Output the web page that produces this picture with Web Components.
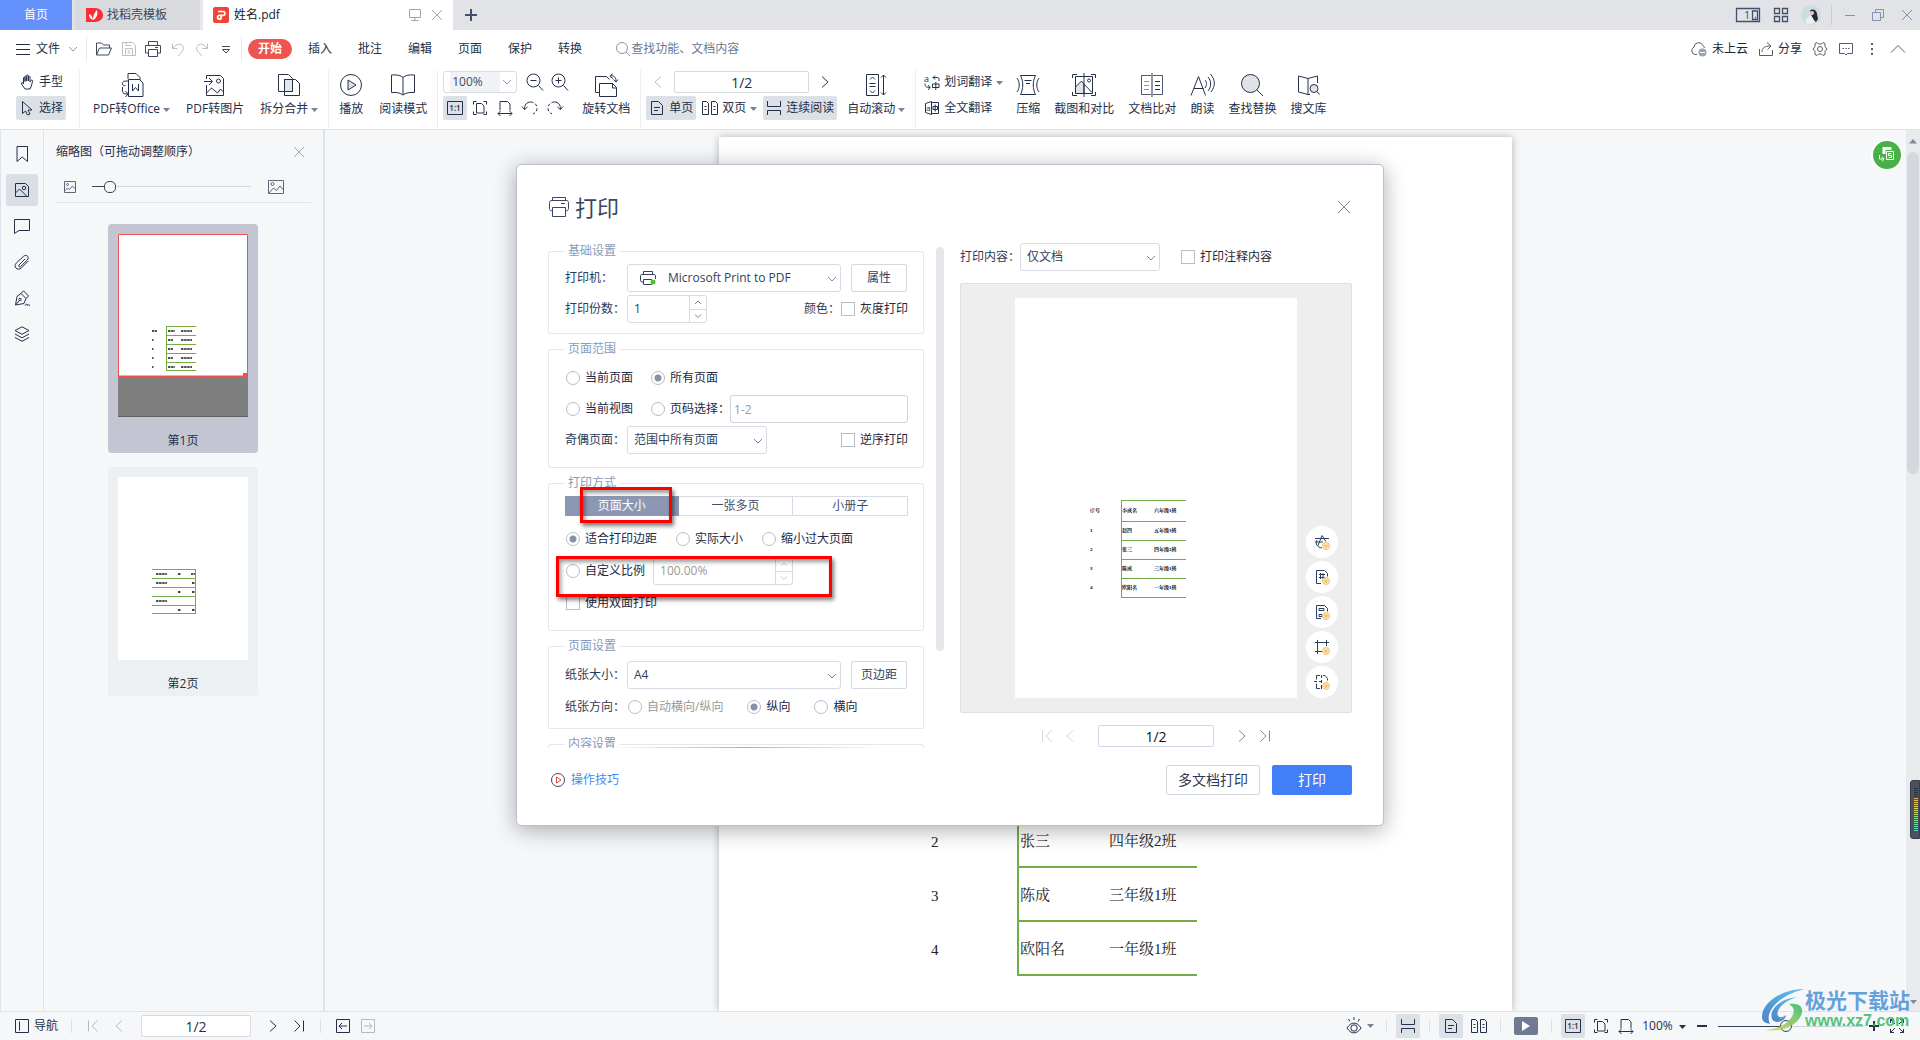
<!DOCTYPE html>
<html lang="zh-CN">
<head>
<meta charset="utf-8">
<title>姓名.pdf</title>
<style>
html,body{margin:0;height:100%;overflow:hidden}
body{font:12px/16px "Open Sans","Noto Sans CJK SC",sans-serif;color:#24304a;background:#f5f7f9}
</style>
</head>
<body>
<pdf-app></pdf-app>
<script>
const BASE = `
*{box-sizing:border-box}
button,input,select{font:inherit;color:inherit;margin:0}
button{border:0;background:none;padding:0;display:inline-flex;align-items:center;justify-content:center;white-space:nowrap}
a{color:inherit;text-decoration:none}
input,select{outline:0}
ui-icon{flex:none}
`;
function define(tag, css, html) {
  customElements.define(tag, class extends HTMLElement {
    constructor() {
      super();
      this.attachShadow({mode: 'open'}).innerHTML =
        `<style>${BASE}${css}</style>` + (typeof html === 'function' ? html(this) : html);
    }
  });
}

const DOC = '<path d="M2.5 1.5h7l4 4v9h-11z"/>';
const COIN = '<circle cx="12" cy="12" r="3.5" fill="#fbe3b8" stroke="#f5c677"/><path d="M10.5 11l1.5 1.2 1.5-1.2M12 12v2" stroke="#eda94a"/>';
// name: [size, svg content]
const ICONS = {
  menu: [16, '<path d="M1 3.5h14M1 8.5h14M1 13.5h14"/>'],
  chev: [10, '<path d="M1 3l4 4 4-4"/>'],
  chevs: [8, '<path d="M1 6l3-3 3 3"/>'],
  chevd: [8, '<path d="M1 2.500l3 3 3-3"/>'],
  chevup: [16, '<path d="M1 11.500l7-7 7 7"/>'],
  folder: [18, '<path d="M1.500 15V3h5l2 2h6v3M1.500 15l3-7h12l-3 7z"/>'],
  save: [16, '<path d="M1.500 14.500v-13h10l3 3v10zM4.500 14.500v-7h7v7M5 1.500v3h5M6.500 10h3M6.500 12h3"/>'],
  print: [18, '<path d="M4.500 5V1.500h9V5M4.500 13h-3V5.500h15V13h-3M4.500 9.500h9v7h-9zM11 7.500h3"/>'],
  printbig: [22, '<path d="M4.500 4V1.500h13V4M4.500 15c-2 0-3-1-3-2.500v-6C1.500 5 2.500 4.500 4 4.500h14c1.500 0 2.500.5 2.500 2v6c0 1.500-1 2.500-3 2.500M4.500 11.500h13v9h-13zM13 7.500h4"/>'],
  undo: [16, '<path d="M2.500 2.500v5h5M2.500 7.500l3-3c4-3 8-.5 8 3 0 4-5 5-5 7.500"/>'],
  redo: [16, '<path d="M13.500 2.500v5h-5M13.500 7.500l-3-3c-4-3-8-.5-8 3 0 4 5 5 5 7.500"/>'],
  more: [12, '<path d="M2 3.500h8M2.500 6.500l3.500 3.500 3.500-3.500z"/>'],
  search: [16, '<circle cx="7" cy="7" r="5.500"/><path d="M11 11l4 4"/>'],
  close: [14, '<path d="M2 2l10 10M12 2L2 12"/>'],
  closebig: [14, '<path d="M1 1l12 12M13 1L1 13"/>'],
  plus: [14, '<path d="M7 1v12M1 7h12" stroke-width="2"/>'],
  plusS: [14, '<path d="M7 2v10M2 7h10" stroke-width="2"/>'],
  screen: [14, '<path d="M1.500 1.500h11v8h-11zM7 9.500v3M3.500 12.500h7"/>'],
  docer: [16, '<path d="M0 2h9a7 6 0 010 14H0z" transform="translate(0 -1)" fill="#fb2f33" stroke="none"/><path d="M7 13c-3-1-4-3-4-6 2 0 3 2 4 6zM7 13c0-4 1-7 4-10 1 4 0 8-4 10z" fill="#fff" stroke="none"/>'],
  pdf: [16, '<rect width="16" height="16" rx="2" fill="#f0453a" stroke="none"/><path d="M5 4.500h5a1.900 1.900 0 010 3.800H6.500a1.900 1.900 0 100 3.800A1.700 1.700 0 008.200 10.400V9" stroke="#fff" stroke-width="1.700"/>'],
  devices: [26, '<path d="M1.500 6.500h23v13h-23zM17.500 9h5v8.500h-5zM20 15.500h1" stroke-width="1.300"/><text x="9" y="17" font-size="11" fill="currentColor" stroke="none">1</text>'],
  grid: [16, '<path d="M1.500 1.500h5v5h-5zM9.500 1.500h5v5h-5zM1.500 9.500h5v5h-5zM9.500 9.500h5v5h-5z" stroke-width="1.300"/>'],
  avatar: [20, '<circle cx="10" cy="10" r="10" fill="#c9dde3" stroke="none"/><path d="M9 6c2-3 7-1 7 3l1 5-2 3-3-3-2-5z" fill="#2c2630" stroke="none"/><circle cx="11" cy="8" r="2" fill="#f0cfc8" stroke="none"/><path d="M5 18c0-5 2-7 4-7s4 3 4 7a10 10 0 01-8 0z" fill="#e9f1f4" stroke="none"/>'],
  min: [12, '<path d="M1 6.500h10"/>'],
  restore: [14, '<path d="M1.500 4.500h8v8h-8zM4.500 4.500v-3h8v8h-3"/>'],
  cloud: [18, '<path d="M7 14.500H5A4 4 0 014 7a4.700 4.700 0 019-1.500c.5.500 1 1.500 1.500 2.500"/><circle cx="12.500" cy="12.500" r="4" fill="#99a3b8" stroke="none"/><path d="M10 12.500h5" stroke="#fff"/>'],
  share: [16, '<path d="M1.500 8v6.500h13V9M4 11c0-4 3-6 8-6M9 1.500L13 5 9.500 8.500"/>'],
  gear: [16, '<path d="M5 1.500l1.500 1.500h3L11 1.500l2 1v3l2 2.500-2 2.500v3l-2 1-1.500-1.500h-3L5 14.500l-2-1v-3L1 8l2-2.500v-3z"/><circle cx="8" cy="8" r="2.500"/>'],
  chat: [16, '<path d="M1.500 2.500h13v10h-5L8 14l-1.500-1.500h-5z"/><path d="M4.500 7.500h1.500M7.300 7.500h1.500M10 7.500h1.500"/>'],
  dots: [16, '<path d="M8 2v2M8 7v2M8 12v2" stroke-width="2"/>'],
  hand: [16, '<path d="M4.500 10V4c0-1 1.500-1 1.500 0v3.500V2.500c0-1 1.700-1 1.700 0V7 1.800c0-1 1.700-1 1.700 0V7 3c0-1 1.600-1 1.600 0v5l1-1.500c1-1 2-.3 1.600.8L12 13l-1 2H6l-3.500-5c-.8-1.200.8-2.300 2 0z"/>'],
  cursor: [16, '<path d="M3.500 1.500v12l3-2.500 2 4 2.500-1-2-4h4z"/>'],
  office: [24, '<path d="M8 6V.500h8l4 4V7M8.500 8c-4 0-6 0-6 2.500S4 13 5.500 12.500M2.500 14v4c0 2 1 3 5 3M5.500 18l2.500 3-2.500 3"/><path d="M8.500 6.500h11l3.500 3.500v13.500H8.500z" fill="#fff"/><path d="M12.500 11v7l3-3.500 3 3.500v-7"/>'],
  topic: [24, '<path d="M3.500 6V2.500h14l3 3V22.500H3.500V12M1 8.500h8M6 5l3.500 3.500L6 12M3.500 20l5-5 6 5 3-4 3 3"/><circle cx="15.500" cy="8" r="2"/>'],
  split: [24, '<path d="M1.500 1.500h10l4 4v13h-14z"/><path d="M7.500 6.500h11l4 4v12h-15z"/><path d="M7.500 6.500h8v12h-8z" fill="#e3e6ea"/>'],
  play: [24, '<circle cx="12" cy="12" r="10.500"/><path d="M9 7l8 5-8 5z" fill="#dfe3e8"/>'],
  book: [24, '<path d="M12 4.500c-2-2-6-3-11.500-2.500v17.500c5-.5 9 .5 11.500 2.500 2.500-2 6.500-3 11.500-2.500V2C18 1.500 14 2.500 12 4.500zM12 4.500V22"/>'],
  zout: [18, '<circle cx="7.500" cy="7.500" r="6.500"/><path d="M12.500 12.500l4.500 5M4.500 7.500h6"/>'],
  zin: [18, '<circle cx="7.500" cy="7.500" r="6.500"/><path d="M12.500 12.500l4.500 5M4.500 7.500h6M7.500 4.500v6"/>'],
  one: [16, '<path d="M.500 1.500h15v13H.500z"/><text x="8" y="11" text-anchor="middle" font-size="8" font-weight="600" fill="currentColor" stroke="none">1:1</text>'],
  fit: [16, '<path d="M4.500 3.500h5l2.500 2.500v7H4.500zM1.500 4.500v-3h3M11.500 1.500h3v3M1.500 11.500v3h3M14.500 11.500v3h-3"/>'],
  fitw: [16, '<path d="M3 10.500V1.500h7.500L13 4v6.500M1 13.500h14M3.500 11L1 13.500 3.500 16M12.500 11l2.500 2.500-2.500 2.500"/>'],
  rotl: [18, '<path d="M3.500 10c0-4 2-7 6-7"/><path d="M9.500 3c4 0 6.500 3 6.500 6s-2 5-4 6" stroke-dasharray="3 2"/><path d="M1 7.500L3.500 10.500 6.500 8"/>'],
  rotr: [18, '<path d="M14.500 10c0-4-2-7-6-7"/><path d="M8.500 3C4.500 3 2 6 2 9s2 5 4 6" stroke-dasharray="3 2"/><path d="M17 7.500l-2.500 3L11.500 8"/>'],
  rotdoc: [24, '<path d="M1.500 19V3.500h11l3 3"/><path d="M1.500 19.500h4"/><path d="M5.500 23.500v-13h13l4 4v9z" fill="#fff"/><path d="M18.500 10v5h4.500M16.500 3c3-1 5.500 1 5.500 5M18.500.500l-2.500 3 3 2M19.500 6.500L22 9l2-2.500"/>'],
  left: [14, '<path d="M10 1.500L4 7l6 5.500"/>'],
  right: [14, '<path d="M4 1.500L10 7l-6 5.500"/>'],
  first: [14, '<path d="M1.500 1.500v11M10.500 1.500L5 7l5.500 5.500"/>'],
  last: [14, '<path d="M12.500 1.500v11M3.500 1.500L9 7l-5.500 5.500"/>'],
  single: [16, DOC + '<path d="M5 7.500h6M5 10.500h4"/>'],
  double: [16, '<path d="M.500 1.500h4l2 2v11h-6zM9.500 1.500h4l2 2v11h-6zM2.500 6.500h2M2.500 9.500h2M11.500 6.500h2M11.500 9.500h2"/>'],
  cont: [16, '<path d="M1.500 1v5.500h13V1M1.500 15V10.500h13V15"/>'],
  scroll: [24, '<path d="M2.500 1.500h12v21h-12zM6 6.500l2.500-2.500L11 6.500M6 17.500L8.500 20 11 17.500M5.500 10.500h6M5.500 13.500h6M19.500 2v20M17 4.500L19.500 2 22 4.500M17 19.500l2.500 2.500 2.500-2.500"/>'],
  word: [16, '<text x="0" y="7.500" font-size="9" fill="currentColor" stroke="none">a</text><path d="M9 3.500h4c1.500 0 2 .5 2 2V7M11 1.500L9 3.500l2 2M1 9.500c0 3 1 4 5 4M4 11l2 2.500L4 16M8.500 10h6.500v3.500H8.500zM11.800 8v8"/>'],
  full: [16, '<path d="M1.500 3.500l6-2v13l-6-2zM7.500 2.500h7v11h-7M9 6.500h4.500v3H9zM11.200 4.500v7"/><text x="2" y="10.500" font-size="8" fill="currentColor" stroke="none">a</text>'],
  compress: [24, '<path d="M4.500 2.500h15c-3 6-3 13 0 19h-15c3-6 3-13 0-19zM1 5c3 4 3 10 0 14M23 5c-3 4-3 10 0 14M8.500 7.500h7M10 10.500h4"/>'],
  shot: [24, '<path d="M3.500 3.500h17v17h-17z"/><path d="M3.500 14l6-6 2.500 3v9.500H3.500z" fill="#dfe3e8"/><path d="M.500 5V1.500H5M19 1.500h4.500V5M.500 19v3.500H5M19 22.500h4.500V19M12 0v24M12 11l8 8.500"/><circle cx="17" cy="7.500" r="1.500"/>'],
  compare: [24, '<path d="M11 2.500H1.500v19H11M13 2.500h9.500v19H13" stroke-opacity=".8"/><path d="M12 0v24M15 8.500h5M15 12.500h5M15 16.500h5"/><path d="M4 8.500h5M4 12.500h5M4 16.500h5" stroke-opacity=".5"/>'],
  read: [24, '<path d="M1 22.500L8.500 3.500l7 19M4 15.500h9.500M15 7c2 2 2 5 0 8M18 4c3.500 4 3.500 10 0 14M20.500 1c5 6 5 12 .5 18"/>'],
  find: [24, '<circle cx="10.500" cy="10.500" r="9" fill="#dfe3e8"/><path d="M17 17l6 6"/>'],
  lib: [24, '<path d="M12 5.500L2.500 3v16l9.500 2.500zM12 5.500L21.500 3v7M12 21.500h2"/><circle cx="18" cy="15.500" r="4" fill="#dfe3e8"/><path d="M21 18.500l2.500 3"/>'],
  mark: [16, '<path d="M3 .500h10.500v15L8.200 11 3 15.500z"/>'],
  thumbs: [16, '<path d="M1.500 1.500h10l3 3v10h-13zM1.500 11l4-4 7.500 7.500"/><circle cx="10" cy="6" r="1.700"/>'],
  note: [16, '<path d="M.500 1.500h15v11H5l-4.500 3z"/>'],
  clip: [16, '<path d="M11 5l-6 6c-1 1.200.5 2.600 1.600 1.600l6.500-6.500c3-3-.8-6.500-3.800-3.600L2.500 8.800c-4 4 1.200 8.700 5 5l7-7"/>'],
  pen: [16, '<path d="M7 3.500l5 5-2 5-8.500 1.500L3 6.500zM7 3.500L9.500 .800l5 5.200L12 8.500M1.500 15l3.500-4M11 15.500c1-2 2-2 2 0 1-1 1.500-1 3 0"/><circle cx="6" cy="9.500" r="1.200"/>'],
  layers: [16, '<path d="M8 .800l7 3.700-7 3.800L1 4.500zM1 8l7 3.800L15 8M1 11.500l7 3.800 7-3.800"/>'],
  picS: [12, '<path d="M.500.500h11v11H.500zM.500 10l3-3 2 1.500L8.500 5l3 3"/><circle cx="3.500" cy="3.500" r="1"/>'],
  picL: [18, '<path d="M1.500 2.500h15v13h-15zM2 15l4.500-5 3 2.500 3.500-4.500 3.500 4"/><circle cx="5.500" cy="6" r="1.500"/>'],
  printok: [18, '<path d="M4.500 5V2.500h9V5M4 13c-2 0-2.500-.5-2.500-2V7c0-1 .5-1.500 1.500-1.500h12c1 0 1.500.5 1.500 1.500v3M4.500 10.500h8v5h-8z"/><circle cx="14" cy="13" r="2.500" fill="#55c22d" stroke="none"/>'],
  tip: [16, '<circle cx="8" cy="8" r="6.500"/><path d="M6.500 5l4.500 3-4.500 3z" stroke="#e8443c"/>'],
  t1: [16, '<path d="M1 4.500h14M1 8h8M4 11.500l4-10 4 6M3 6c-2 4 0 7 5 8"/>' + COIN],
  t2: [16, '<path d="M2.500 14.500v-13h8l3 3v3M2.500 14.500H7M6.500 4v6M9 4v6M5 5.500h6M5 8.500h6"/>' + COIN],
  t3: [16, '<path d="M2.500 14.500v-13h8l3 3v3M2.500 14.500H7M5 4.500h5v2H5zM5 10.500h3v2H5z"/>' + COIN],
  t4: [16, '<path d="M1 3.500h14M3.500 1v14M12.500 1v6M1 12.500h7"/>' + COIN],
  t5: [16, '<path d="M6 1.500H2.500v4M2.500 9.500v5H6M9 1.500h2l2.500 3v2M7.500 1v3M7.500 6v3M7.500 11v4M0 7.500h3M5 7.500h3" />' + COIN],
  nav: [16, '<path d="M1.500 1.500h13v13h-13zM5.500 3.500v9"/>'],
  back: [16, '<path d="M1.500 1.500h13v13h-13zM4 8h8M7 5L4 8l3 3"/>'],
  fwd: [16, '<path d="M1.500 1.500h13v13h-13zM4 8h8M9 5l3 3-3 3"/>'],
  eye: [18, '<path d="M2 11c4-6.500 10-6.500 14 0-4 6.500-10 6.500-14 0zM9 0v3M3.500 2l1.500 2.500M14.500 2L13 4.500"/><circle cx="9" cy="11" r="3.200"/>'],
  minus: [12, '<path d="M1 6h10" stroke-width="2"/>'],
  expand: [16, '<path d="M1.500 5v-3.500H5M1.500 1.500L6 6M11 1.500h3.500V5M14.500 1.500L10 6M1.500 11v3.500H5M1.500 14.500L6 10M14.500 11v3.500H11M14.500 14.500L10 10"/>'],
  convert: [18, '<path d="M4.500 8V1h9v3h-6v4z" fill="#fff" stroke="none"/><path d="M8.500 5.500h7v8h-7z" stroke="#fff"/><path d="M13.500 7.500H10.500v2h3v2h-3M1.500 9v4h4M4 10.500l2 2.500-2 2.500" stroke="#fff"/>'],
  up: [8, '<path d="M4 2L0 6.500h8z" fill="currentColor" stroke="none"/>'],
  dn: [7, '<path d="M3.500 6L0 2h7z" fill="currentColor" stroke="none"/>'],
};
define('ui-icon', ':host{display:inline-flex}svg{display:block;overflow:visible}', el => {
  const [s, body] = ICONS[el.getAttribute('name')];
  return `<svg width="${s}" height="${s}" viewBox="0 0 ${s} ${s}" fill="none" stroke="currentColor" stroke-width="1" aria-hidden="true">${body}</svg>`;
});
const ic = n => `<ui-icon name="${n}"></ui-icon>`;

/* large button: icon over caption */
define('tool-button', `
:host{display:block}
button{flex-direction:column;gap:4px;padding-top:3px}
span{display:flex;align-items:center;gap:3px;height:16px}
span ui-icon{color:#76819b}`, el =>
`<button>${ic(el.getAttribute('icon'))}<span><slot></slot>${el.hasAttribute('menu') ? ic('dn') : ''}</span></button>`);

/* small button: icon beside caption */
define('row-button', `
:host{display:block}
button{height:24px;padding:0 3px;gap:4px;border-radius:2px;min-width:24px}
:host([on]) button{background:#dce1e7}
:host([dim]) button{color:#b4b9c4}
.c{color:#76819b}`, el =>
`<button aria-label="${el.getAttribute('tip') || el.textContent}">${ic(el.getAttribute('icon'))}<slot></slot>${el.hasAttribute('menu') ? '<ui-icon class="c" name="dn"></ui-icon>' : ''}</button>`);
const rb = (icon, tip, attr = '') => `<row-button icon="${icon}" tip="${tip}" ${attr}></row-button>`;

define('title-bar', `
:host{display:flex;height:30px;background:#e1e3e7;align-items:stretch}
.t{display:flex;align-items:center;gap:5px;white-space:nowrap}
.home{width:72px;background:#6490fb;color:#fff;justify-content:center}
.tpl{width:128px;margin-left:3px;padding-left:11px;background:#d8dadd;border-right:3px solid #e7e8eb;color:#3d4659;justify-content:flex-start}
.doc{width:250px;background:#fff;padding:0 9px 0 10px;color:#111a2e}
.doc .x{margin-left:auto;display:flex;gap:8px;color:#9aa5bd}
.add{width:36px;color:#43506d}
.win{margin-left:auto;display:flex;align-items:center;gap:12px;color:#43506d;padding-right:6px}
.win i{width:1px;height:20px;background:#c9ccd4;margin-left:-2px}
.sys{display:flex;gap:15px;color:#8292b4}`,
`<button class="t home">首页</button>
<button class="t tpl">${ic('docer')}找稻壳模板</button>
<div class="t doc">${ic('pdf')}姓名.pdf<span class="x"><button aria-label="投屏">${ic('screen')}</button><button aria-label="关闭标签">${ic('close')}</button></span></div>
<button class="add" aria-label="新建">${ic('plus')}</button>
<div class="win"><button aria-label="窗口">${ic('devices')}</button><button aria-label="应用">${ic('grid')}</button>${ic('avatar')}<i></i>
<div class="sys"><button aria-label="最小化">${ic('min')}</button><button aria-label="还原">${ic('restore')}</button><button aria-label="关闭">${ic('close')}</button></div></div>`);

define('menu-bar', `
:host{display:flex;height:38px;background:#fff;align-items:center;padding:0 14px 0 15px}
.file{gap:5px;margin-right:8px}
.file ui-icon:last-child{color:#8a92a5;margin-left:3px}
i{width:1px;height:24px;background:#e3e5e9}
.quick{display:flex;gap:7px;padding:0 7px 0 8px;color:#3e475c}
.quick button{min-width:17px}
.dim{color:#b9bec8}
nav{display:flex;gap:6px;margin-left:6px}
nav button{height:20px;padding:0 10px;border-radius:10px}
nav .on{background:#ed5650;color:#fff;font-weight:700}
.find{display:flex;align-items:center;margin-left:23px;color:#8b95a9}
.find input{border:0;background:none;width:140px;padding:0}
.find input::placeholder{color:#6d788f}
.r{margin-left:auto;display:flex;align-items:center;gap:10px;color:#555d6e}
.r button{gap:4px}
.r b{font-weight:400;color:#1c2538}`,
`<button class="file">${ic('menu')}文件${ic('chev')}</button><i></i>
<div class="quick"><button aria-label="打开">${ic('folder')}</button><button class="dim" aria-label="保存">${ic('save')}</button><button aria-label="打印">${ic('print')}</button><button class="dim" aria-label="撤销">${ic('undo')}</button><button class="dim" aria-label="恢复">${ic('redo')}</button><button aria-label="更多">${ic('more')}</button></div><i></i>
<nav><button class="on">开始</button><button>插入</button><button>批注</button><button>编辑</button><button>页面</button><button>保护</button><button>转换</button></nav>
<label class="find">${ic('search')}<input aria-label="查找" placeholder="查找功能、文档内容"></label>
<div class="r"><button>${ic('cloud')}<b>未上云</b></button><button>${ic('share')}<b>分享</b></button><button aria-label="设置">${ic('gear')}</button><button aria-label="反馈">${ic('chat')}</button><button aria-label="更多">${ic('dots')}</button><button aria-label="收起">${ic('chevup')}</button></div>`);

define('tool-bar', `
:host{display:flex;height:62px;background:#fff;padding:2px 16px 0;border-bottom:1px solid #dfe2e6;align-items:flex-start;white-space:nowrap}
.g{display:flex;gap:16px}
.w{gap:14px}
.col{display:flex;flex-direction:column;gap:2px}
.m{margin-right:10px}
.row{display:flex;align-items:center;gap:1px;height:24px}
i{width:1px;height:58px;background:#eceef1;margin:0 10px}
i.f{margin:0 13px}
i.s{margin:0 5px 0 10px}
.combo{position:relative;width:74px;height:22px;margin-right:5px}
.combo select{appearance:none;width:74px;height:22px;border:1px solid #d9dce3;border-radius:3px;background:linear-gradient(#f0f2f5,#f0f2f5) 6px 0/50px 100% no-repeat #fff;padding:0 8px;color:#3d4a66}
.combo ui-icon{position:absolute;right:5px;top:6px;color:#9299a8;pointer-events:none}
.pg{width:135px;height:22px;border:1px solid #d5d9e0;border-radius:2px;text-align:center;font-size:14px;margin:0 3px}
.n{gap:3px}`,
`<div class="col"><row-button icon="hand">手型</row-button><row-button icon="cursor" on>选择</row-button></div><i class="f"></i>
<div class="g"><tool-button icon="office" menu>PDF转Office</tool-button><tool-button icon="topic">PDF转图片</tool-button><tool-button icon="split" menu>拆分合并</tool-button></div><i></i>
<div class="g"><tool-button icon="play">播放</tool-button><tool-button icon="book">阅读模式</tool-button></div><i class="s"></i>
<div class="col m"><div class="row"><div class="combo"><select aria-label="缩放"><option>100%</option></select>${ic('chev')}</div>${rb('zout','缩小')}${rb('zin','放大')}</div>
<div class="row">${rb('one','实际大小','on')}${rb('fit','适合页面')}${rb('fitw','适合宽度')}${rb('rotl','左转')}${rb('rotr','右转')}</div></div>
<tool-button icon="rotdoc">旋转文档</tool-button><i class="s"></i>
<div class="col m"><div class="row">${rb('left','上一页','dim')}<input class="pg" aria-label="页码" value="1/2">${rb('right','下一页')}</div>
<div class="row n"><row-button icon="single" on>单页</row-button><row-button icon="double" menu>双页</row-button><row-button icon="cont" on>连续阅读</row-button></div></div>
<tool-button icon="scroll" menu>自动滚动</tool-button><i class="s"></i>
<div class="col m"><row-button icon="word" menu>划词翻译</row-button><row-button icon="full">全文翻译</row-button></div>
<div class="g w"><tool-button icon="compress">压缩</tool-button><tool-button icon="shot">截图和对比</tool-button><tool-button icon="compare">文档比对</tool-button><tool-button icon="read">朗读</tool-button><tool-button icon="find">查找替换</tool-button><tool-button icon="lib">搜文库</tool-button></div>`);

define('side-rail', `
:host{display:flex;flex-direction:column;gap:4px;align-items:center;width:44px;padding-top:8px;border:solid #dfe2ea;border-width:0 1px;flex:none}
button{width:32px;height:32px;border-radius:3px}
.on{background:#dadfe6}`,
`<button aria-label="书签">${ic('mark')}</button><button class="on" aria-label="缩略图">${ic('thumbs')}</button><button aria-label="批注">${ic('note')}</button><button aria-label="附件">${ic('clip')}</button><button aria-label="签名">${ic('pen')}</button><button aria-label="图层">${ic('layers')}</button>`);

const G = '#70ad47';
const dash = (x, y, w) => `<path d="M${x} ${y}h${w}" stroke="#1c1420" stroke-width="1.600" stroke-dasharray="2.500 .6"/>`;
const yy = [92, 101, 110, 119, 128, 136];
const page1 = yy.map(y => `<path d="M48 ${y}.5h30" stroke="${G}"/>`).join('') + `<path d="M48.500 92v45" stroke="${G}"/>` +
  [0,1,2,3,4].map(i => dash(34, 97 + i * 9, i ? 1.5 : 5) + dash(50, 97 + i * 9, i % 4 ? 5 : 7) + dash(63, 97 + i * 9, 11)).join('');
const page2 = yy.map(y => `<path d="M34 ${y}.5h44" stroke="${G}"/>`).join('') + `<path d="M77.500 92v45" stroke="${G}"/>` +
  [[1,1,4],[1,0,3],[0,1,3],[1,0,0],[0,1,3]].map(([a,b,c], i) => { const y = 97 + i * 9;
    return (a ? dash(38, y, 11) : '') + (b ? dash(60, y, 3) : '') + (c ? dash(77 - c, y, c) : ''); }).join('');

define('page-thumb', `
:host{display:flex;flex-direction:column;align-items:center;width:150px;height:229px;padding-top:10px;border-radius:4px;background:#edf0f3}
:host([on]){background:#c3c6d2}
svg{display:block;background:#fff}
span{margin-top:16px}`, el =>
`<svg width="130" height="183" viewBox="0 0 130 183" fill="none">${el.hasAttribute('on') ?
 page1 + '<path d="M0 143h130v40H0z" fill="#7f7f7f"/><path d="M0 182.500h130" stroke="#626262"/><path d="M.500.500h129v142H.500zM0 142h130" stroke="#ec5350"/><path d="M125 139h4v4h-4z" fill="#ec5350"/>' : page2}</svg><span><slot></slot></span>`);

define('thumb-panel', `
:host{display:flex;flex-direction:column;width:281px;flex:none;border-right:2px solid #dfe2ea;padding:14px 12px 0}
header{display:flex;justify-content:space-between;align-items:center;height:16px;padding-right:5px}
header button{color:#9aa2b1}
.z{display:flex;align-items:center;margin-top:12px;height:31px;padding:0 26px 1px 8px;gap:16px;border-bottom:1px solid #dfe2e8;color:#5f6878}
input{appearance:none;flex:1;min-width:0;height:12px;background:linear-gradient(#3c465a,#3c465a) 0 50%/12px 1px no-repeat,linear-gradient(#d3d6dc,#d3d6dc) 0 50%/100% 1px no-repeat}
input::-webkit-slider-thumb{appearance:none;width:12px;height:12px;border:1px solid #3c465a;border-radius:5px;background:#f5f7f9}
.l{display:flex;flex-direction:column;align-items:center;gap:14px;margin-top:21px;padding-right:1px}`,
`<header>缩略图（可拖动调整顺序）<button aria-label="关闭面板">${ic('close')}</button></header>
<div class="z">${ic('picS')}<input type="range" aria-label="缩略图大小" value="8">${ic('picL')}</div>
<div class="l"><page-thumb on>第1页</page-thumb><page-thumb>第2页</page-thumb></div>`);

define('doc-view', `
:host{display:flex;flex:1;min-width:0}
.v{flex:1;display:flex;justify-content:center;padding-top:7px;overflow:hidden}
.p{width:793px;background:#fff;box-shadow:0 0 8px rgba(0,0,0,.28);padding:677px 0 0 212px}
table{border-spacing:0;font:15px/20px "Liberation Serif","Noto Serif CJK SC","Noto Sans CJK SC",serif;color:#222}
td{height:54px;padding:1px 0 0;border-bottom:2px solid #70ad47}
td:nth-child(1){width:86px;border:0}
td:nth-child(2){width:92px;border-left:2px solid #70ad47;padding-left:1px}
td:nth-child(3){width:88px}
.s{width:14px;background:#e9eaee;display:flex;flex-direction:column;align-items:center;padding:7px 0 6px;color:#7d89a6}
.s b{width:12px;height:322px;border-radius:6px;background:#d4d7de;margin-top:7px}
.s ui-icon:last-child{margin-top:auto}`,
`<div class="v"><div class="p"><table><tr><td>2</td><td>张三</td><td>四年级2班</td></tr><tr><td>3</td><td>陈成</td><td>三年级1班</td></tr><tr><td>4</td><td>欧阳名</td><td>一年级1班</td></tr></table></div></div>
<div class="s">${ic('up')}<b></b>${ic('dn')}</div>`);

define('status-bar', `
:host{display:flex;align-items:center;height:29px;background:#f5f7f9;border-top:1px solid #dfe2e8;padding:0 15px 0 11px}
.a,.b{display:flex;align-items:center;gap:1px}
.b{margin-left:auto}
i{width:1px;height:14px;background:#dcdfe6;margin:0 9px}
.b i{margin:0 8px}
.pg{width:110px;height:22px;border:1px solid #d5d9e0;border-radius:2px;background:#fff;text-align:center;font-size:14px;margin:0 9px}
.pl{width:24px;height:18px;background:#6f7b93;border-radius:2px;color:#fff;margin:0 4px}
.pc{width:50px;gap:6px}
.sp{width:2px}
.ex{margin-left:7px}
input[type=range]{appearance:none;width:146px;margin:0 2px 0 3px;height:14px;background:linear-gradient(#33415c,#33415c) 0 50%/68px 1px no-repeat,linear-gradient(#cdd1da,#cdd1da) 0 50%/100% 1px no-repeat}
input[type=range]::-webkit-slider-thumb{appearance:none;width:12px;height:12px;border:1px solid #33415c;border-radius:6px;background:#f5f7f9}`,
`<div class="a"><row-button icon="nav">导航</row-button><i></i>${rb('first','首页','dim')}${rb('left','上一页','dim')}<input class="pg" aria-label="页码" value="1/2">${rb('right','下一页')}${rb('last','末页')}<i></i>${rb('back','后退')}${rb('fwd','前进','dim')}</div>
<div class="b">${rb('eye','护眼','menu')}<i></i>${rb('cont','连续','on')}<i></i>${rb('single','单页','on')}<span class="sp"></span>${rb('double','双页')}<i></i><button class="pl" aria-label="播放"><svg width="8" height="10"><path d="M0 0l8 5-8 5z" fill="#fff"/></svg></button><i></i>${rb('one','实际大小','on')}<span class="sp"></span>${rb('fit','适合页面')}${rb('fitw','适合宽度')}<button class="pc">100%${ic('dn')}</button>${rb('minus','缩小')}<input type="range" aria-label="缩放" value="46"><button aria-label="放大">${ic('plusS')}</button><button class="ex" aria-label="全屏">${ic('expand')}</button></div>`);

define('group-box', `
:host{display:block}
fieldset{margin:0;min-width:0;border:1px solid #e4e7ed;border-radius:2px;padding:var(--pad,5px 15px 10px 16px)}
legend{height:16px;padding:0 3px;color:#8b9abb}
div{display:flex;flex-direction:column;gap:var(--gap,3px)}`, el =>
`<fieldset><legend>${el.getAttribute('legend')}</legend><div><slot></slot></div></fieldset>`);

/* side tools of the preview */
define('preview-tools', `
:host{display:flex;flex-direction:column;gap:3px}
button{width:32px;height:32px;border-radius:16px;background:#fff;color:#2f3d5c}`,
['t1','t2','t3','t4','t5'].map((n, i) => `<button aria-label="${['水印','页码','页眉页脚','裁剪','分割'][i]}">${ic(n)}</button>`).join(''));

const sel = (id, w, opt) => `<span class="sel" style="width:${w}px"><select id="${id}"><option>${opt}</option></select>${ic('chev')}</span>`;
const spin = (id, w, v, dis = '') => `<span class="spin" style="width:${w}px"><input id="${id}" value="${v}" ${dis}><span><button aria-label="增加" ${dis && 'disabled'}>${ic('chevs')}</button><button aria-label="减少" ${dis && 'disabled'}>${ic('chevd')}</button></span></span>`;
const radio = (g, t, a = '') => `<label class="o"><input type="radio" name="${g}" ${a}>${t}</label>`;
const check = (t) => `<label class="o"><input type="checkbox">${t}</label>`;

define('print-dialog', `
:host{display:block;width:868px;background:#fff;border:1px solid #b9bfcd;border-radius:5px;box-shadow:0 4px 22px rgba(0,0,0,.32);color:#2b3a58}
header{display:flex;align-items:center;gap:5px;height:78px;padding:6px 32px 0 31px;color:#3a4663}
h1{font-size:22px;line-height:30px;font-weight:400;margin:0}
header button{margin-left:auto;color:#7a8399}
.body{display:flex;padding:0 31px;height:505px}
.scroll{width:376px;height:505px;overflow:hidden;display:flex;flex-direction:column;gap:7px;position:relative}
.scroll::after{content:"";position:absolute;left:60px;right:40px;bottom:0;height:1px;background:linear-gradient(90deg,#a9b1c600,#a9b1c6,#a9b1c600)}
.bar{width:8px;height:404px;margin:4px 16px 0 12px;border-radius:4px;background:#e6e7ea}
.row{display:flex;align-items:center;height:28px}
.lb{width:62px}
.c1{width:65px}
.g8{gap:8px}.g18{gap:18px}.g23{gap:23px}
.o{display:flex;align-items:center;gap:5px;white-space:nowrap;color:#1e2840}
.o input{appearance:none;width:14px;height:14px;border:1px solid #b7bcc8;background:#fff;margin:0 0 0 1px}
.o input[type=radio]{border-radius:7px}
.o input:checked{background:radial-gradient(circle,#8690a6 3px,#fff 4px)}
.o:has(:disabled){color:#9a9a9a}
.end{margin-left:auto}
.sel{position:relative;display:flex;height:28px;flex:none}
.sel select{appearance:none;width:100%;padding:0 6px;border:1px solid #d8dbe3;border-radius:3px;background:#fff;color:#33415c}
.sel ui-icon{position:absolute;right:4px;top:10px;color:#7f8798;pointer-events:none}
.sel .pr{left:12px;right:auto;top:5px;color:#33415c}
#pr{padding-left:40px}
.bt{height:28px;width:56px;border:1px solid #d5d8e0;border-radius:2px;margin-left:10px;color:#33415c}
.tx{height:28px;flex:1;min-width:0;border:1px solid #cfd3dc;border-radius:3px;padding:0 3px}
.tx::placeholder{color:#999}
.spin{display:flex;height:28px;border:1px solid #d8dbe3;border-radius:3px;background:#fff}
.spin input{flex:1;min-width:0;border:0;background:none;padding:0 6px}
.spin>span{width:17px;display:flex;flex-direction:column;border-left:1px solid #d8dbe3}
.spin button{flex:1;color:#80899b}
.spin button+button{border-top:1px solid #d8dbe3}
.spin input:disabled{color:#999}
.spin button:disabled{color:#c8ccd4}
.tabs{display:flex;height:20px;margin-bottom:5px;border:1px solid #d8dbe3}
.tabs button{flex:1;color:#3f4d6b}
.tabs .on{background:#8c98b3;color:#fff;margin:-1px 0 -1px -1px}
.tabs button+button+button{border-left:1px solid #d8dbe3}
.right{flex:1;min-width:0;display:flex;flex-direction:column;gap:12px}
.right .lb{width:60px}
.sp{width:20px}
.view{display:grid;grid-template-columns:1fr 282px 1fr;padding:14px 0;border:1px solid #dedfe1;border-radius:2px;background:#eee}
.page{grid-column:2;height:400px;background:#fff;padding:202px 0 0 75px}
preview-tools{align-self:end;padding-left:9px}
table{border-spacing:0;height:98px;font:bold 5px/6px "Liberation Serif","Noto Serif CJK SC","Noto Sans CJK SC",serif;color:#000;white-space:nowrap}
td{padding:0;border-bottom:1px solid #70ad47}
tr:first-child td{border-top:1px solid #70ad47}
td:nth-child(1){width:31px;border:0!important}
td:nth-child(2){width:33px;border-left:1px solid #70ad47}
td:nth-child(3){width:32px}
.pager{display:flex;align-items:center;justify-content:center;height:22px;gap:8px;color:#7d8699}
.pager input{width:116px;height:22px;border:1px solid #cdd8e8;border-radius:2px;text-align:center;font-size:14px;color:#111;margin:0 13px}
.dim{color:#d0d3da}
footer{display:flex;align-items:center;margin:17px 31px 30px 33px;height:30px;gap:12px}
footer a{display:flex;align-items:center;gap:5px;color:#3d8bf8;margin-right:auto}
footer a ui-icon{color:#3d4a66}
footer button{height:30px;font-size:14px;width:94px;border:1px solid #d3d6de;border-radius:2px}
footer .go{width:80px;background:#417ff9;border-color:#417ff9;color:#fff}
mark{position:absolute;background:none;border:3px solid #fe0000;box-shadow:2px 3px 4px rgba(0,0,0,.5),inset 2px 3px 4px rgba(0,0,0,.4);pointer-events:none}
.m1{left:32px;top:244px;width:92px;height:36px}
.m2{left:8px;top:313px;width:276px;height:41px}`,
`<header>${ic('printbig')}<h1>打印</h1><button aria-label="关闭">${ic('closebig')}</button></header>
<div class="body">
<div class="scroll">
 <group-box legend="基础设置">
  <div class="row"><label class="lb" for="pr">打印机：</label><span class="sel" style="width:214px"><select id="pr"><option>Microsoft Print to PDF</option></select><ui-icon class="pr" name="printok"></ui-icon>${ic('chev')}</span><button class="bt">属性</button></div>
  <div class="row"><label class="lb" for="cp">打印份数：</label>${spin('cp', 80, '1')}<span class="end">颜色：</span>${check('灰度打印')}</div>
 </group-box>
 <group-box legend="页面范围" style="--pad:7px 15px 13px 16px">
  <div class="row">${radio('rg', '<span class="c1">当前页面</span>')}${radio('rg', '所有页面', 'checked')}</div>
  <div class="row">${radio('rg', '<span class="c1">当前视图</span>')}${radio('rg', '页码选择：')}<input class="tx" aria-label="页码选择" placeholder="1-2"></div>
  <div class="row"><label class="lb" for="oe">奇偶页面：</label>${sel('oe', 140, '范围中所有页面')}<span class="end"></span>${check('逆序打印')}</div>
 </group-box>
 <group-box legend="打印方式" style="--pad:5px 15px 13px 16px;--gap:4px">
  <div class="tabs"><button class="on">页面大小</button><button>一张多页</button><button>小册子</button></div>
  <div class="row g18">${radio('sc', '适合打印边距', 'checked')}${radio('sc', '实际大小')}${radio('sc', '缩小过大页面')}</div>
  <div class="row g8">${radio('sc', '自定义比例')}${spin('rt', 140, '100.00%', 'disabled aria-label="比例"')}</div>
  <div class="row">${check('使用双面打印')}</div>
 </group-box>
 <group-box legend="页面设置" style="--pad:7px 15px 7px 16px;--gap:4px">
  <div class="row"><label class="lb" for="pp">纸张大小：</label>${sel('pp', 214, 'A4')}<button class="bt">页边距</button></div>
  <div class="row"><span class="lb">纸张方向：</span><span class="row g23">${radio('or', '自动横向/纵向', 'disabled')}${radio('or', '纵向', 'checked')}${radio('or', '横向')}</span></div>
 </group-box>
 <group-box legend="内容设置"><div class="row"></div></group-box>
 <mark class="m1"></mark><mark class="m2"></mark>
</div>
<div class="bar"></div>
<div class="right">
 <div class="row"><label class="lb" for="ct">打印内容：</label>${sel('ct', 140, '仅文档')}<span class="sp"></span>${check('打印注释内容')}</div>
 <div class="view"><div class="page"><table>
  <tr><td>序号</td><td>李成名</td><td>六年级1班</td></tr><tr><td>1</td><td>赵四</td><td>五年级3班</td></tr><tr><td>2</td><td>张三</td><td>四年级2班</td></tr><tr><td>3</td><td>陈成</td><td>三年级1班</td></tr><tr><td>4</td><td>欧阳名</td><td>一年级1班</td></tr></table></div>
  <preview-tools></preview-tools></div>
 <div class="pager"><button class="dim" aria-label="首页">${ic('first')}</button><button class="dim" aria-label="上一页">${ic('left')}</button><input aria-label="预览页码" value="1/2"><button aria-label="下一页">${ic('right')}</button><button aria-label="末页">${ic('last')}</button></div>
</div>
</div>
<footer><a href="#">${ic('tip')}操作技巧</a><button>多文档打印</button><button class="go">打印</button></footer>`);

define('site-mark', `
:host{display:flex;align-items:center;pointer-events:none;opacity:.85;white-space:nowrap}
b{display:block;font-size:21px;line-height:22px;color:#4b93d6}
span{display:block;font:bold 16px/20px "Liberation Sans",sans-serif;color:#36bd62}
svg{display:block}`,
`<svg width="44" height="44" viewBox="0 0 44 44" fill="none"><defs><linearGradient id="a" x1="0" y1="1" x2="1" y2="0"><stop stop-color="#2f6fbd"/><stop offset="1" stop-color="#45bdf0"/></linearGradient><linearGradient id="b" x1="0" y1="1" x2="1" y2="0"><stop stop-color="#e5d84b"/><stop offset="1" stop-color="#2bb567"/></linearGradient></defs>
<path d="M43 1C22 1 1 14 1 29c0 5 4 6 8 7C3 24 17 8 43 1z" fill="url(#a)"/><path d="M36 9C18 11 8 22 11 31c3 6 14 2 14-4-6 5-10 1-8-4 3-7 10-11 19-14z" fill="url(#a)"/><path d="M28 16c14-2 16 7 10 15-7 9-20 13-34 11 12-1 21-5 26-12 4-6 4-10-2-14z" fill="url(#b)"/></svg>
<div><b>极光下载站</b><span>www.xz7.com</span></div>`);

define('pdf-app', `
:host{display:flex;flex-direction:column;height:100vh;position:relative;overflow:hidden}
main{flex:1;min-height:0;display:flex;overflow:hidden}
print-dialog{position:absolute;left:516px;top:164px}
site-mark{position:absolute;right:10px;bottom:8px}
.fab{position:absolute;right:17px;top:139px;width:32px;height:32px;border:2px solid #fff;border-radius:16px;background:#47b146;color:#fff}
.meter{position:absolute;right:0;top:780px;width:10px;height:59px;border-radius:3px 0 0 3px;background:#4a5161;border:1px solid #363c4a;padding:7px 1px 6px 3px}
.meter div{height:100%;background:repeating-linear-gradient(#0000 0 1px,#4a5161 1px 2px),linear-gradient(#2c313d 22%,#f2a94e 22%,#e8dc5c 45%,#8bdc8a 70%,#4fd6d4)}`,
`<title-bar></title-bar><menu-bar></menu-bar><tool-bar></tool-bar>
<main><side-rail></side-rail><thumb-panel></thumb-panel><doc-view></doc-view></main>
<status-bar></status-bar>
<button class="fab" aria-label="转换">${ic('convert')}</button><div class="meter"><div></div></div>
<print-dialog></print-dialog><site-mark></site-mark>`);
</script>
</body>
</html>
